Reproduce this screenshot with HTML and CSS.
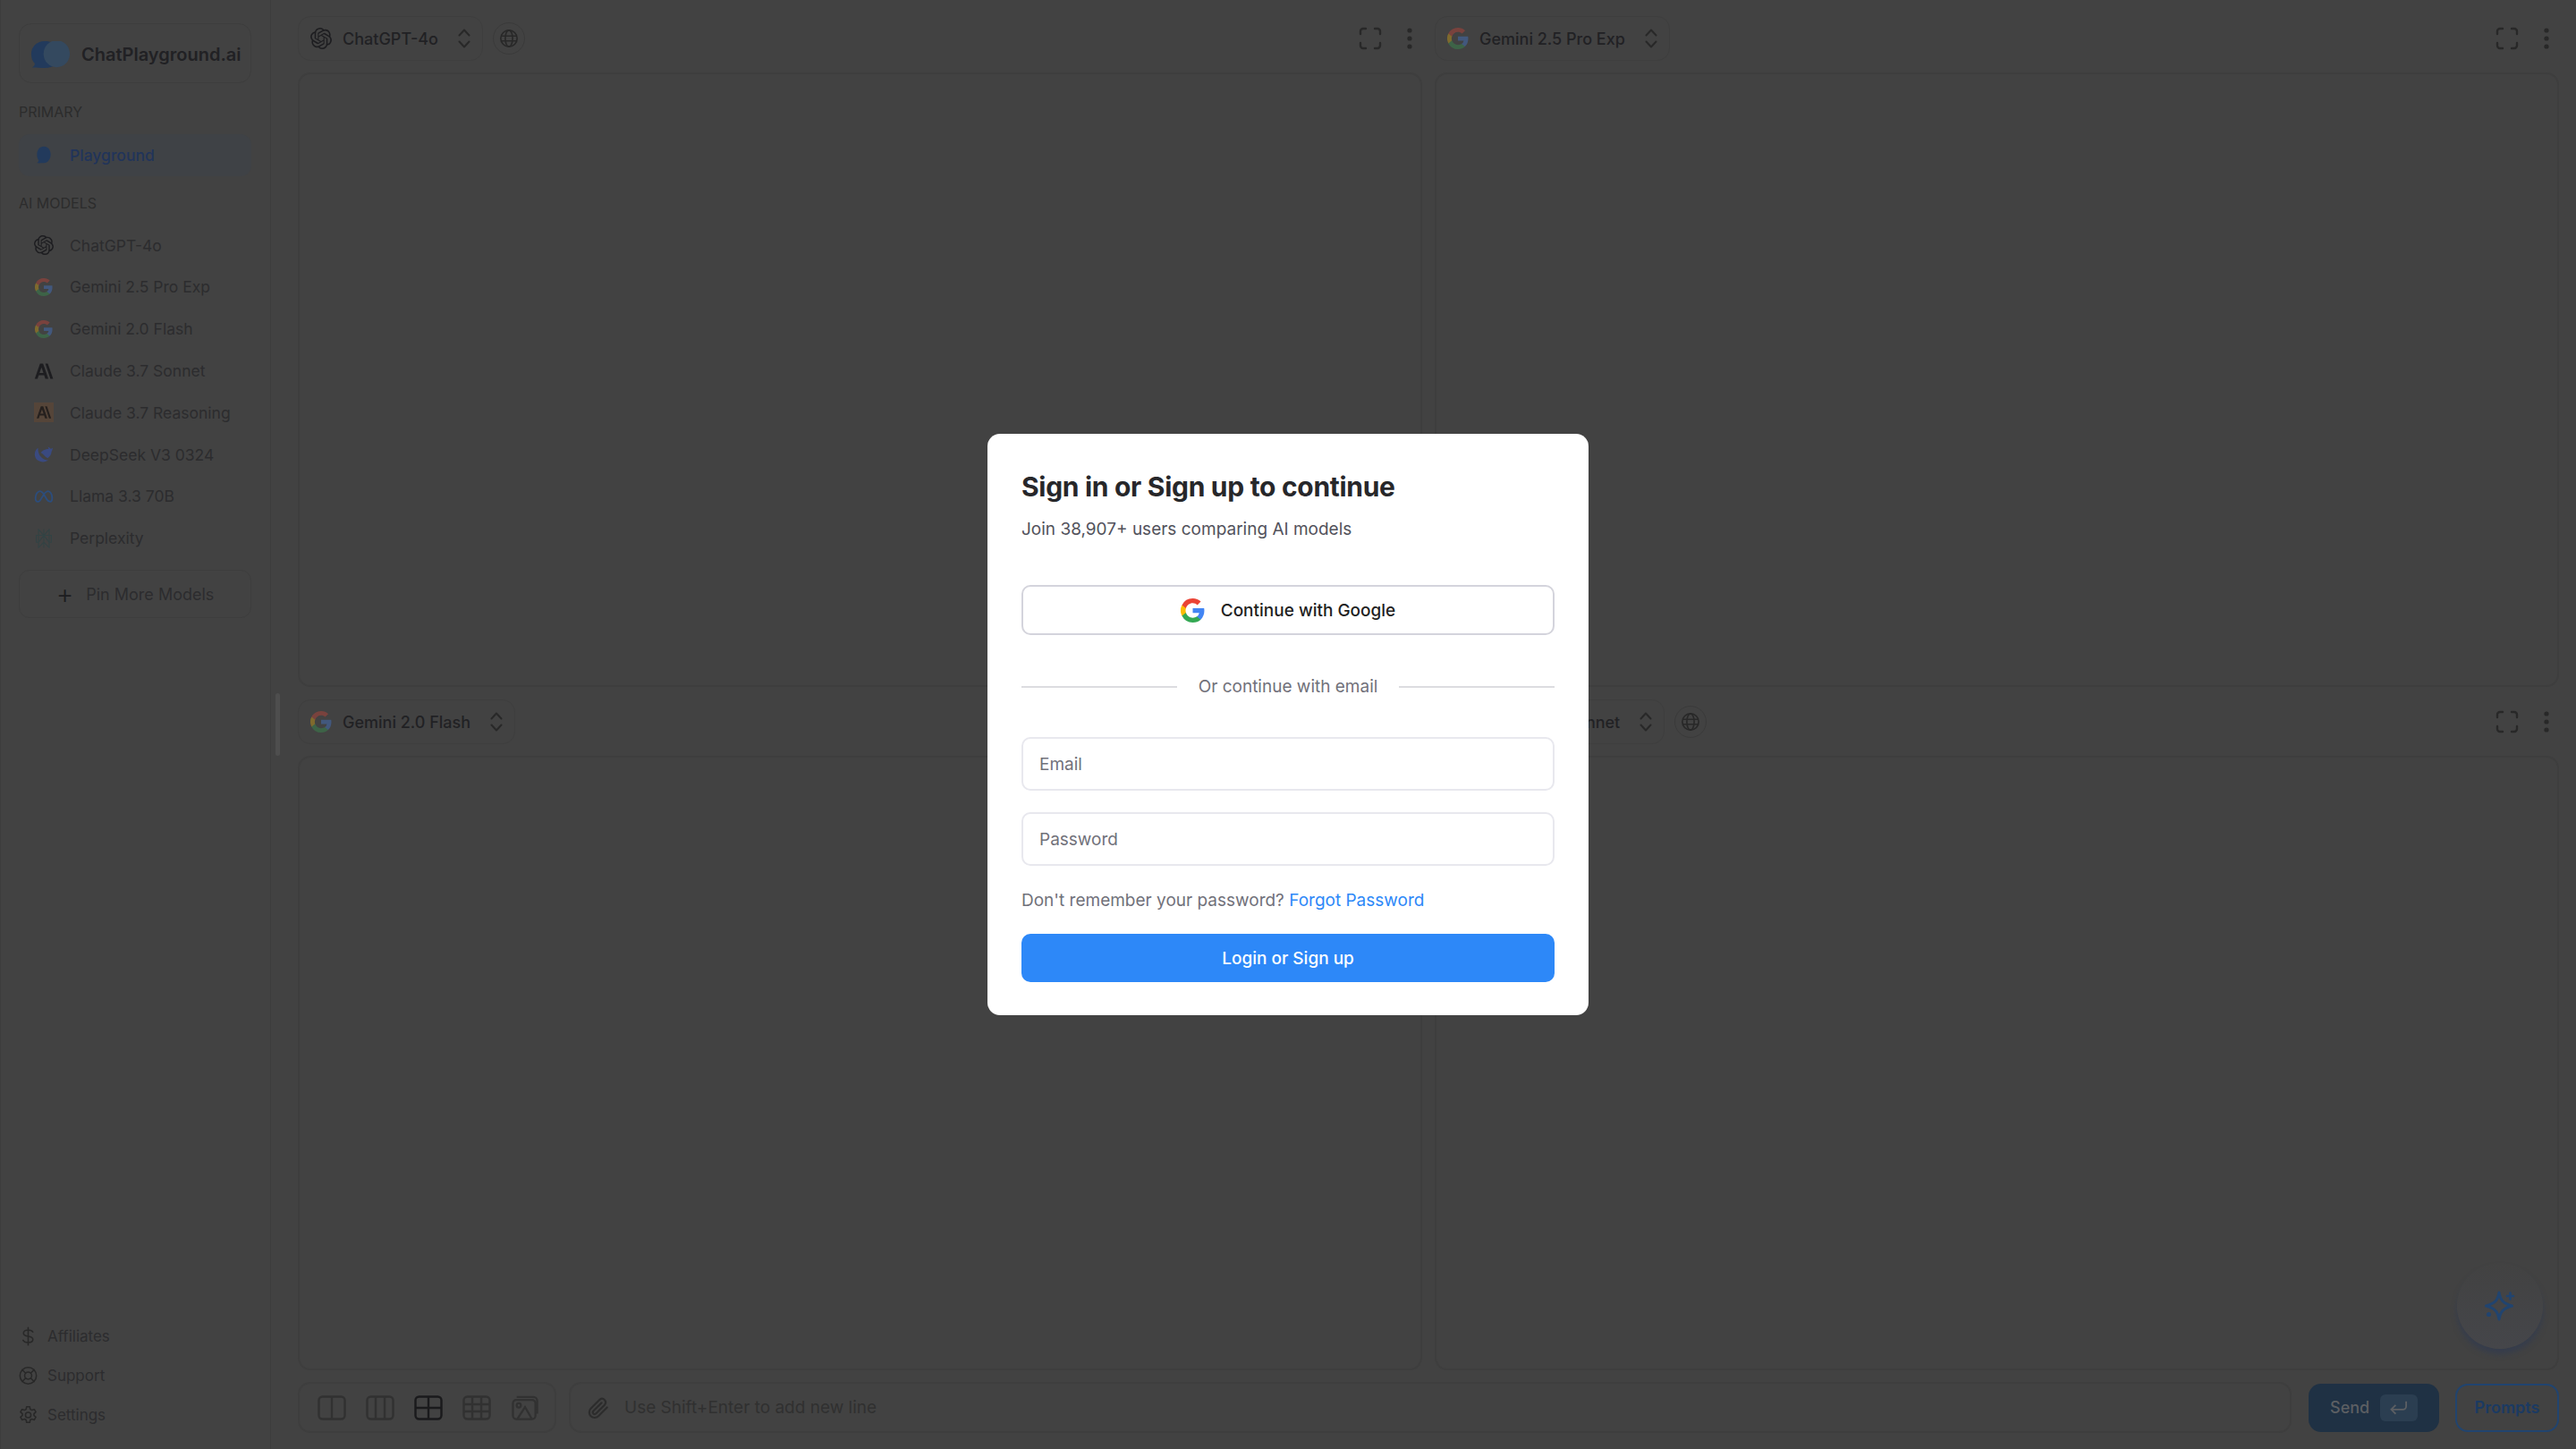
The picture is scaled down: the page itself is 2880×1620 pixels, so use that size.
FILE: index.html
```html
<!DOCTYPE html>
<html lang="en">
<head>
    <meta charset="UTF-8">
    <meta name="viewport" content="width=device-width, initial-scale=1.0">
    <title>ChatPlayground.ai</title>
    <link rel="stylesheet" href="styles.css">
</head>
<body>
    <!-- shared logos -->
    <svg class="sprite" xmlns="http://www.w3.org/2000/svg">
        <symbol id="i-openai" viewBox="0 0 24 24">
            <path fill="currentColor" d="M22.2819 9.8211a5.9847 5.9847 0 0 0-.5157-4.9108 6.0462 6.0462 0 0 0-6.5098-2.9A6.0651 6.0651 0 0 0 4.9807 4.1818a5.9847 5.9847 0 0 0-3.9977 2.9 6.0462 6.0462 0 0 0 .7427 7.0966 5.98 5.98 0 0 0 .511 4.9107 6.051 6.051 0 0 0 6.5146 2.9001A5.9847 5.9847 0 0 0 13.2599 24a6.0557 6.0557 0 0 0 5.7718-4.2058 5.9894 5.9894 0 0 0 3.9977-2.9001 6.0557 6.0557 0 0 0-.7475-7.0729zm-9.022 12.6081a4.4755 4.4755 0 0 1-2.8764-1.0408l.1419-.0804 4.7783-2.7582a.7948.7948 0 0 0 .3927-.6813v-6.7369l2.02 1.1686a.071.071 0 0 1 .038.052v5.5826a4.504 4.504 0 0 1-4.4945 4.4944zm-9.6607-4.1254a4.4708 4.4708 0 0 1-.5346-3.0137l.142.0852 4.783 2.7582a.7712.7712 0 0 0 .7806 0l5.8428-3.3685v2.3324a.0804.0804 0 0 1-.0332.0615L9.74 19.9502a4.4992 4.4992 0 0 1-6.1408-1.6464zM2.3408 7.8956a4.485 4.485 0 0 1 2.3655-1.9728V11.6a.7664.7664 0 0 0 .3879.6765l5.8144 3.3543-2.0201 1.1685a.0757.0757 0 0 1-.071 0l-4.8303-2.7865A4.504 4.504 0 0 1 2.3408 7.872zm16.5963 3.8558L13.1038 8.364 15.1192 7.2a.0757.0757 0 0 1 .071 0l4.8303 2.7913a4.4944 4.4944 0 0 1-.6765 8.1042v-5.6772a.79.79 0 0 0-.407-.667zm2.0107-3.0231l-.142-.0852-4.7735-2.7818a.7759.7759 0 0 0-.7854 0L9.409 9.2297V6.8974a.0662.0662 0 0 1 .0284-.0615l4.8303-2.7866a4.4992 4.4992 0 0 1 6.6802 4.66zM8.3065 12.863l-2.02-1.1638a.0804.0804 0 0 1-.038-.0567V6.0742a4.4992 4.4992 0 0 1 7.3757-3.4537l-.142.0805L8.704 5.459a.7948.7948 0 0 0-.3927.6813zm1.0976-2.3654l2.602-1.4998 2.6069 1.4998v2.9994l-2.5974 1.4997-2.6067-1.4997Z"/>
        </symbol>
        <symbol id="i-google" viewBox="0 0 24 24">
            <path fill="#4285F4" d="M23.5 12.27c0-.85-.08-1.67-.22-2.45H12v4.64h6.45a5.5 5.5 0 0 1-2.4 3.61v3h3.88c2.27-2.09 3.57-5.17 3.57-8.8z"/>
            <path fill="#34A853" d="M12 24c3.24 0 5.95-1.07 7.93-2.91l-3.88-3.01c-1.07.72-2.45 1.15-4.05 1.15-3.12 0-5.77-2.11-6.71-4.95H1.28v3.11A12 12 0 0 0 12 24z"/>
            <path fill="#FBBC05" d="M5.29 14.28a7.2 7.2 0 0 1 0-4.56V6.61H1.28a12 12 0 0 0 0 10.78z"/>
            <path fill="#EA4335" d="M12 4.77c1.76 0 3.34.61 4.59 1.8l3.44-3.44C17.95 1.19 15.24 0 12 0A12 12 0 0 0 1.28 6.61l4.01 3.11C6.23 6.88 8.88 4.77 12 4.77z"/>
        </symbol>
        <symbol id="i-anthropic" viewBox="0 0 26 24">
            <path fill="currentColor" d="M8 2h4l7 20h-4l-1.500-4.600H6.200L4.700 22H1zm1.900 5L7.300 14.400h5.200zM15 2h3.300l7 20h-3.600z"/>
        </symbol>
        <symbol id="i-updown" viewBox="0 0 16 24">
            <path fill="none" stroke="currentColor" stroke-width="2" stroke-linecap="round" stroke-linejoin="round" d="M2.500 8.500 8 2.500l5.500 6M2.500 15.500 8 21.500l5.500-6"/>
        </symbol>
        <symbol id="i-globe" viewBox="0 0 24 24">
            <g fill="none" stroke="currentColor" stroke-width="1.800">
                <circle cx="12" cy="12" r="10"/><ellipse cx="12" cy="12" rx="4.500" ry="10"/><path d="M2.500 9h19M2.500 15h19"/>
            </g>
        </symbol>
        <symbol id="i-full" viewBox="0 0 26 26">
            <path fill="none" stroke="currentColor" stroke-width="2.400" stroke-linecap="round" d="M2 8V5a3 3 0 0 1 3-3h3M18 2h3a3 3 0 0 1 3 3v3M24 18v3a3 3 0 0 1-3 3h-3M8 24H5a3 3 0 0 1-3-3v-3"/>
        </symbol>
        <symbol id="i-dots" viewBox="0 0 6 24">
            <circle cx="3" cy="3" r="2.600" fill="currentColor"/><circle cx="3" cy="12" r="2.600" fill="currentColor"/><circle cx="3" cy="21" r="2.600" fill="currentColor"/>
        </symbol>
    </svg>

    <div class="app">
        <aside class="sidebar">
            <div class="logo-box">
                <svg class="logo-mark" viewBox="0 0 46 36" preserveAspectRatio="none">
                    <path fill="#223a5c" d="M16 0c6 0 12 2 14 6v24c-3 4-8 6-14 6-3 0-9 0-14-.5 2-1.500 3-3.500 3-5.500C2 26.500 1 22 1 17 1 8 7 0 16 0z"/>
                    <ellipse cx="30" cy="17" rx="15" ry="18" fill="#34495f"/>
                </svg>
                <span>ChatPlayground.ai</span>
            </div>

            <div class="side-label">PRIMARY</div>
            <a class="side-row active">
                <svg class="side-icon" viewBox="0 0 26 26">
                    <path fill="#223a5c" d="M13 2c5.500 0 9 4.600 9 10.500S18.500 24 13 24c-2 0-6 .2-9 0 1.500-1 2.200-2.500 2.200-3.600C4.500 18.500 4 15.500 4 12.500 4 6.600 7.500 2 13 2z"/>
                </svg>
                Playground
            </a>

            <div class="side-label second">AI MODELS</div>
            <a class="side-row"><svg class="side-icon dark"><use href="#i-openai"/></svg>ChatGPT-4o</a>
            <a class="side-row"><svg class="side-icon faded"><use href="#i-google"/></svg>Gemini 2.5 Pro Exp</a>
            <a class="side-row"><svg class="side-icon faded"><use href="#i-google"/></svg>Gemini 2.0 Flash</a>
            <a class="side-row"><svg class="side-icon dark"><use href="#i-anthropic"/></svg>Claude 3.7 Sonnet</a>
            <a class="side-row">
                <span class="side-icon claude-box"><svg class="claude-mark"><use href="#i-anthropic"/></svg></span>
                Claude 3.7 Reasoning
            </a>
            <a class="side-row">
                <svg class="side-icon" viewBox="0 0 26 24">
                    <path fill="#3a4a80" d="M25 3c-1 1-2 1.500-3 1.500-1-1-2-2-4-2.500 1 1 1.400 2 1.300 3C17 4 10 7 9 10c3 1 5 5 9 7 3-2 5-5 5-8 .8-2 1.700-4 2-6zM5.500 3.500C2.500 5 1 8.500 1 12c0 6 5 10 11 10 3 0 5.500-1 7-2.500-5 .5-8-2-10.500-5C6.500 12 5 8 5.500 3.500z"/>
                </svg>
                DeepSeek V3 0324
            </a>
            <a class="side-row">
                <svg class="side-icon" viewBox="0 0 26 20">
                    <path fill="none" stroke="#2c4d7c" stroke-width="2.200" d="M5 17c-2 0-3-2-3-5 0-5 3-9 6-9 4 0 7 8 9 11 1.500 2.300 3 3 4.500 3 2 0 2.500-2 2.500-4.500C24 7 21.500 3 18.500 3 14 3 10 13 8 15.500 7 16.500 6 17 5 17z"/>
                </svg>
                Llama 3.3 70B
            </a>
            <a class="side-row">
                <svg class="side-icon" viewBox="0 0 24 26">
                    <path fill="none" stroke="#324344" stroke-width="1.200" d="M5 1l7 8 7-8v8h3v9h-3v7l-7-7-7 7v-7H2V9h3zM12 1v24M5 9h14M5 9v9l7-9 7 9V9"/>
                </svg>
                Perplexity
            </a>

            <button class="pin-btn"><span class="pin-plus">+</span>Pin More Models</button>

            <div class="side-footer">
                <a class="foot-row">
                    <svg class="foot-icon" viewBox="0 0 24 24"><path d="M12 1v22M18 6.500C17 4.500 15 4 12 4 8.500 4 6 5.500 6 8s2.500 3.500 6 4c3.500.5 6 1.500 6 4s-2.500 4-6 4c-3.500 0-5.500-1-6.500-3"/></svg>
                    Affiliates
                </a>
                <a class="foot-row">
                    <svg class="foot-icon" viewBox="0 0 24 24"><circle cx="12" cy="12" r="10.500"/><circle cx="12" cy="12" r="4.500"/><path d="M4.500 4.500l4.300 4.300M19.500 4.500l-4.300 4.300M4.500 19.500l4.300-4.300M19.500 19.500l-4.300-4.300"/></svg>
                    Support
                </a>
                <a class="foot-row">
                    <svg class="foot-icon" viewBox="0 0 24 24"><circle cx="12" cy="12" r="3.500"/><path d="M10 1.500h4l.7 3.200 2 1.100 3.100-1 2 3.400-2.400 2.200v2.200l2.400 2.200-2 3.400-3.100-1-2 1.100-.7 3.200h-4l-.7-3.200-2-1.100-3.100 1-2-3.400 2.400-2.200v-2.200L2.200 8.200l2-3.400 3.100 1 2-1.100z"/></svg>
                    Settings
                </a>
            </div>
        </aside>

        <span class="drag-handle"></span>

        <main class="main">
            <div class="panels">
                <section class="panel">
                    <header class="panel-head">
                        <div class="model-select"><svg class="model-icon dark"><use href="#i-openai"/></svg>ChatGPT-4o<svg class="updown"><use href="#i-updown"/></svg></div>
                        <span class="globe"><svg><use href="#i-globe"/></svg></span>
                        <svg class="full-icon"><use href="#i-full"/></svg>
                        <svg class="dots-icon"><use href="#i-dots"/></svg>
                    </header>
                    <div class="panel-body"></div>
                </section>
                <section class="panel">
                    <header class="panel-head">
                        <div class="model-select"><svg class="model-icon faded"><use href="#i-google"/></svg>Gemini 2.5 Pro Exp<svg class="updown"><use href="#i-updown"/></svg></div>
                        <svg class="full-icon"><use href="#i-full"/></svg>
                        <svg class="dots-icon"><use href="#i-dots"/></svg>
                    </header>
                    <div class="panel-body"></div>
                </section>
                <section class="panel">
                    <header class="panel-head">
                        <div class="model-select"><svg class="model-icon faded"><use href="#i-google"/></svg>Gemini 2.0 Flash<svg class="updown"><use href="#i-updown"/></svg></div>
                    </header>
                    <div class="panel-body"></div>
                </section>
                <section class="panel">
                    <header class="panel-head">
                        <div class="model-select"><svg class="model-icon dark"><use href="#i-anthropic"/></svg>Claude 3.7 Sonnet<svg class="updown"><use href="#i-updown"/></svg></div>
                        <span class="globe"><svg><use href="#i-globe"/></svg></span>
                        <svg class="full-icon"><use href="#i-full"/></svg>
                        <svg class="dots-icon"><use href="#i-dots"/></svg>
                    </header>
                    <div class="panel-body">
                        <button class="fab">
                            <svg viewBox="0 0 36 36"><path fill="none" stroke="#21446f" stroke-width="3" stroke-linejoin="round" d="M17 3c1.500 8.500 4 12 14.500 15C21 21 18.500 24.500 17 33c-1.500-8.500-4-12-14.500-15C13 15 15.500 11.500 17 3z"/><path fill="none" stroke="#21446f" stroke-width="2.600" stroke-linecap="round" d="M29.500 3.500v7M26 7h7"/><circle cx="5.500" cy="27.500" r="2.600" fill="#21446f"/></svg>
                        </button>
                    </div>
                </section>
            </div>

            <footer class="bottom-bar">
                <div class="layout-box">
                    <svg class="layout-icon" viewBox="0 0 32 28"><rect x="1.500" y="1.500" width="29" height="25" rx="4"/><path d="M16 2v24"/></svg>
                    <svg class="layout-icon" viewBox="0 0 32 28"><rect x="1.500" y="1.500" width="29" height="25" rx="4"/><path d="M11 2v24M21 2v24"/></svg>
                    <svg class="layout-icon on" viewBox="0 0 32 28"><rect x="1.500" y="1.500" width="29" height="25" rx="4"/><path d="M16 2v24M2 14h28"/></svg>
                    <svg class="layout-icon" viewBox="0 0 32 28"><rect x="1.500" y="1.500" width="29" height="25" rx="4"/><path d="M11 2v24M21 2v24M2 10h28M2 18h28"/></svg>
                    <svg class="layout-icon" viewBox="0 0 32 30"><rect x="1.500" y="5.500" width="27" height="23" rx="4"/><path d="M6 2h20a4.500 4.500 0 0 1 4.500 4.500V22M7 28l9-14 8 14"/><circle cx="8.500" cy="12" r="2.500"/></svg>
                </div>
                <div class="prompt-box">
                    <svg class="clip-icon" viewBox="0 0 24 24"><path d="M21 11.500 12 20.500a5.500 5.500 0 0 1-7.800-7.800l9.200-9.200a3.700 3.700 0 0 1 5.200 5.200l-9.200 9.200a1.800 1.800 0 0 1-2.600-2.600l8.500-8.500"/></svg>
                    <span>Use Shift+Enter to add new line</span>
                </div>
                <button class="send-btn">Send
                    <span class="enter-key"><svg viewBox="0 0 24 20"><path d="M21 2v6a4 4 0 0 1-4 4H3M8 6.500 2.500 12 8 17.500"/></svg></span>
                </button>
                <button class="prompts-btn">Prompts</button>
            </footer>
        </main>
    </div>

    <div class="overlay">
        <form class="modal">
            <h2>Sign in or Sign up to continue</h2>
            <p class="modal-sub">Join 38,907+ users comparing AI models</p>

            <button type="button" class="google-btn"><svg><use href="#i-google"/></svg>Continue with Google</button>

            <div class="divider"><span>Or continue with email</span></div>

            <input type="email" placeholder="Email">
            <input type="password" placeholder="Password">

            <p class="forgot">Don't remember your password? <a>Forgot Password</a></p>

            <button type="button" class="login-btn">Login or Sign up</button>
        </form>
    </div>
</body>
</html>
```

FILE: styles.css
```css
* {
    box-sizing: border-box;
}

html, body {
    margin: 0;
    height: 100%;
}

body {
    font-family: Inter, "Liberation Sans", sans-serif;
    background-color: #424242;
    color: #262629;
    overflow: hidden;
}

button {
    font-family: inherit;
}

.sprite {
    position: absolute;
    width: 0;
    height: 0;
}

.app {
    display: flex;
    height: 1620px;
}

/* sidebar */
.sidebar {
    width: 303px;
    flex-shrink: 0;
    display: flex;
    flex-direction: column;
    padding: 26px 21px 16px 20px;
    border-right: 1px solid #3c3c3c;
    border-left: 1px solid #3c3c3c;
}

.logo-box {
    height: 67px;
    display: flex;
    align-items: center;
    gap: 12px;
    padding: 2px 0 0 12px;
    border: 1px solid #3d3d3d;
    border-radius: 14px;
    font-size: 20px;
    font-weight: 600;
    color: #212124;
    white-space: nowrap;
}

.logo-mark {
    width: 45px;
    height: 30px;
    flex-shrink: 0;
}

.side-label {
    height: 20px;
    margin: 22px 0 15px;
    font-size: 16px;
    line-height: 20px;
    color: #2c2c2c;
}

.side-label.second {
    margin: 20px 0 14px;
}

.side-row {
    height: 46.800px;
    flex-shrink: 0;
    display: flex;
    align-items: center;
    gap: 18px;
    padding-left: 17px;
    border-radius: 12px;
    font-size: 17.500px;
    color: #2c2c2e;
    white-space: nowrap;
}

.side-row.active {
    background-color: #3f4246;
    color: #21345a;
    font-weight: 500;
}

.side-icon {
    width: 22px;
    height: 22px;
    flex-shrink: 0;
}

.dark {
    color: #1d1d20;
}

.faded {
    opacity: 0.33;
}

.side-row .faded {
    padding: 1px;
}

.claude-box {
    display: flex;
    align-items: center;
    justify-content: center;
    background-color: #554539;
    color: #25201e;
}

.claude-mark {
    width: 18px;
    height: 16px;
}

.pin-btn {
    height: 54px;
    flex-shrink: 0;
    margin-top: 12px;
    display: flex;
    align-items: center;
    justify-content: center;
    gap: 14px;
    background: none;
    border: 1px solid #3d3d3d;
    border-radius: 12px;
    font-size: 18px;
    color: #2c2c2e;
}

.pin-plus {
    font-size: 30px;
    line-height: 1;
    font-weight: 300;
    color: #1d1d20;
}

.side-footer {
    margin-top: auto;
}

.foot-row {
    height: 44px;
    display: flex;
    align-items: center;
    gap: 11px;
    font-size: 17px;
    color: #2c2c2e;
}

.foot-icon {
    width: 21px;
    height: 26px;
    fill: none;
    stroke: #282828;
    stroke-width: 1.800;
    stroke-linejoin: round;
    stroke-linecap: round;
}

.drag-handle {
    position: absolute;
    left: 308px;
    top: 775px;
    width: 5px;
    height: 70px;
    background-color: #4e4e4e;
    border-radius: 3px;
}

/* main area */
.main {
    flex: 1;
    min-width: 0;
    display: flex;
    flex-direction: column;
    padding: 18px 19px 18px 30px;
}

.panels {
    display: grid;
    grid-template-columns: 1fr 1fr;
    grid-template-rows: 750px 750px;
    gap: 14px;
}

.panel {
    display: flex;
    flex-direction: column;
    min-width: 0;
}

.panel-head {
    height: 50px;
    flex-shrink: 0;
    display: flex;
    align-items: center;
    margin-bottom: 13px;
}

.model-select {
    height: 50px;
    display: flex;
    align-items: center;
    gap: 12px;
    padding: 0 12px 0 13px;
    border: 1px solid #3e3e3e;
    border-radius: 14px;
    font-size: 18px;
    font-weight: 500;
    color: #212124;
    white-space: nowrap;
}

.model-icon {
    width: 24px;
    height: 24px;
    flex-shrink: 0;
}

.updown {
    width: 16px;
    height: 24px;
    margin-left: 9px;
    color: #282828;
}

.globe {
    width: 36px;
    height: 36px;
    margin-left: 11px;
    display: flex;
    align-items: center;
    justify-content: center;
    border: 1px solid #3a3a3a;
    border-radius: 50%;
    color: #282828;
}

.globe svg {
    width: 22px;
    height: 22px;
}

.full-icon {
    width: 26px;
    height: 26px;
    margin-left: auto;
    color: #282828;
}

.dots-icon {
    width: 6px;
    height: 24px;
    margin: 0 11px 0 28px;
    color: #282828;
}

.panel-body {
    flex: 1;
    position: relative;
    border: 2px solid #3e3e3e;
    border-radius: 14px;
}

.fab {
    position: absolute;
    right: 16px;
    bottom: 22px;
    width: 96px;
    height: 96px;
    display: flex;
    align-items: center;
    justify-content: center;
    background: linear-gradient(#424242, #45464a);
    border: none;
    border-radius: 50%;
    box-shadow: 0 6px 6px #363d4c;
}

.fab svg {
    width: 36px;
    height: 36px;
}

/* bottom bar */
.bottom-bar {
    display: flex;
    align-items: center;
    height: 57px;
    margin-top: 13px;
}

.layout-box {
    width: 289px;
    height: 57px;
    flex-shrink: 0;
    display: flex;
    align-items: center;
    gap: 22px;
    padding-left: 20px;
    border: 2px solid #3e3e3e;
    border-radius: 14px;
}

.layout-icon {
    width: 32px;
    height: 28px;
    flex-shrink: 0;
    fill: none;
    stroke: #313131;
    stroke-width: 2.400;
}

.layout-icon.on {
    stroke: #1a1a1c;
}

.prompt-box {
    flex: 1;
    height: 57px;
    margin: 0 19px 0 14px;
    display: flex;
    align-items: center;
    gap: 16px;
    padding-left: 18px;
    border: 2px solid #3e3e3e;
    border-radius: 14px;
    font-size: 19px;
    color: #303030;
}

.clip-icon {
    width: 26px;
    height: 26px;
    fill: none;
    stroke: #2c2c2c;
    stroke-width: 2;
    stroke-linecap: round;
}

.send-btn {
    width: 146px;
    height: 54px;
    flex-shrink: 0;
    display: flex;
    align-items: center;
    gap: 12px;
    padding-left: 24px;
    background-color: #1f3144;
    border: none;
    border-radius: 14px;
    font-size: 18px;
    font-weight: 500;
    color: #5c5f63;
}

.enter-key {
    width: 42px;
    height: 30px;
    display: flex;
    align-items: center;
    justify-content: center;
    background-color: #2b3e51;
    border-radius: 6px;
}

.enter-key svg {
    width: 22px;
    height: 18px;
    fill: none;
    stroke: #5c5f63;
    stroke-width: 2;
}

.prompts-btn {
    width: 116px;
    height: 54px;
    flex-shrink: 0;
    margin-left: 18px;
    background: none;
    border: 2px solid #21446f;
    border-radius: 14px;
    font-size: 18px;
    font-weight: 600;
    color: #1b3a62;
}

/* sign in modal */
.overlay {
    position: fixed;
    inset: 0;
    display: flex;
    align-items: center;
    justify-content: center;
}

.modal {
    width: 672px;
    height: 650px;
    background-color: #fff;
    border-radius: 14px;
    padding: 37px 38px 38px;
    display: flex;
    flex-direction: column;
}

.modal h2 {
    margin: 0;
    font-size: 30px;
    line-height: 44px;
    font-weight: 700;
    letter-spacing: -0.300px;
    color: #27272a;
}

.modal-sub {
    margin: 13px 0 0;
    font-size: 19px;
    line-height: 26px;
    color: #52525b;
}

.google-btn {
    height: 56px;
    margin-top: 49px;
    flex-shrink: 0;
    display: flex;
    align-items: center;
    justify-content: center;
    gap: 18px;
    background-color: #fff;
    border: 2px solid #d4d4dc;
    border-radius: 10px;
    font-size: 19px;
    font-weight: 500;
    color: #1f1f22;
}

.google-btn svg {
    width: 27px;
    height: 27px;
}

.divider {
    margin-top: 45px;
    display: flex;
    align-items: center;
    gap: 24px;
    font-size: 19px;
    line-height: 26px;
    color: #71717a;
}

.divider::before,
.divider::after {
    content: "";
    flex: 1;
    height: 2px;
    background-color: #dcdce0;
}

.modal input {
    height: 60px;
    flex-shrink: 0;
    padding: 0 18px;
    background-color: #fff;
    border: 2px solid #e8e8ee;
    border-radius: 10px;
    font-family: inherit;
    font-size: 19px;
    color: #27272a;
}

.modal input::placeholder {
    color: #71717a;
    opacity: 1;
}

.modal input[type="email"] {
    margin-top: 43px;
}

.modal input[type="password"] {
    margin-top: 24px;
}

.forgot {
    margin: 26px 0 0;
    font-size: 19px;
    line-height: 26px;
    color: #71717a;
}

.forgot a {
    color: #2d88f8;
}

.login-btn {
    height: 54px;
    margin-top: 24px;
    flex-shrink: 0;
    background-color: #2d88f8;
    border: none;
    border-radius: 10px;
    font-size: 19px;
    font-weight: 500;
    color: #fff;
}
```
